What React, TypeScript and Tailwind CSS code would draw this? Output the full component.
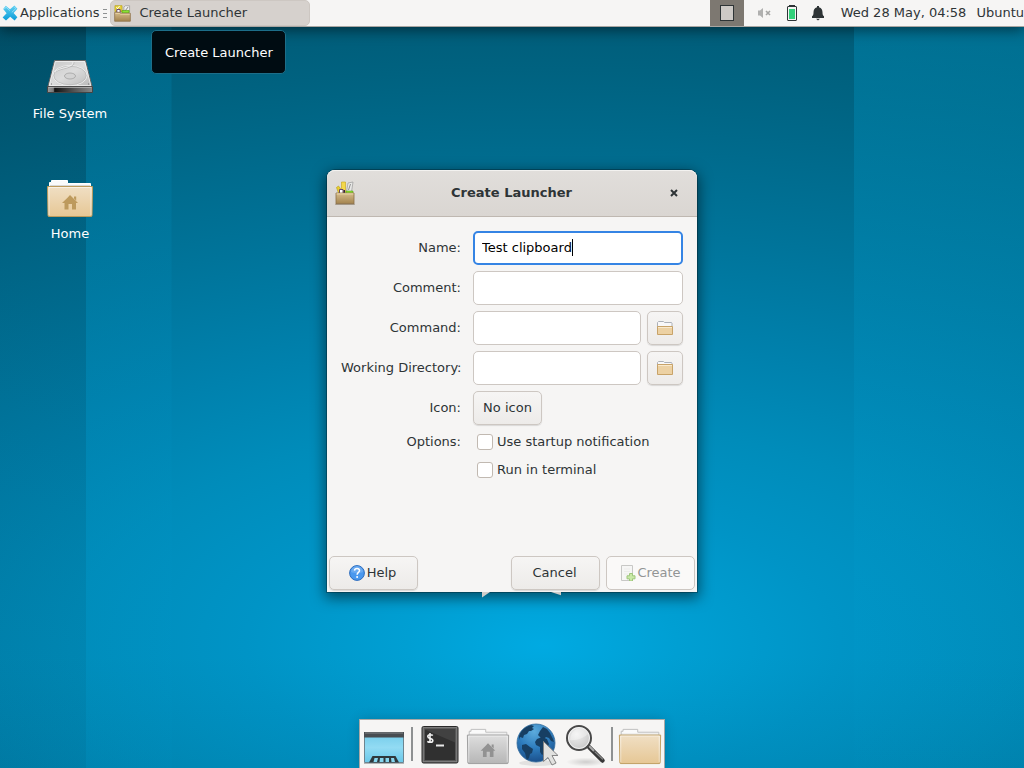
import type { ReactNode } from "react";

const controlBase =
  "flex h-[34px] items-center justify-center rounded-[5px] border border-[#cdc7c2] bg-linear-to-b from-[#f6f5f4] to-[#edebe9] shadow-[0_1px_1px_rgba(0,0,0,0.12)]";
const fieldBase =
  "h-[34px] w-full min-w-0 rounded-[5px] border border-[#cdc7c2] bg-white px-2 text-black outline-none";

function MouseLogo() {
  return (
    <svg viewBox="0 0 16 16" className="size-4 shrink-0" aria-hidden="true">
      <defs>
        <linearGradient id="xf" x1="0" y1="0" x2="0" y2="1">
          <stop offset="0" stopColor="#5fd0f2" />
          <stop offset="1" stopColor="#0a9bd8" />
        </linearGradient>
      </defs>
      <path d="M1.200 4 3.800.800l4.200 3.400L12.400.600 15.400 3.800 11.600 7.900 15.400 12.200 12.600 15.500 8.200 11.800 4 15.500.600 12.600 4.600 8.200z" fill="url(#xf)" />
      <path d="M2.400 4 4 2.200l3.800 3.400M12.400 2l1.400 1.600L9.800 7.400" fill="none" stroke="#a5e6fa" strokeWidth=".8" />
    </svg>
  );
}

function Toolbox({ className, tall = false }: { className: string; tall?: boolean }) {
  return (
    <svg viewBox={tall ? "0 0 20 24" : "0 0 18 18"} preserveAspectRatio="none" className={className} aria-hidden="true">
      <defs>
        <linearGradient id="tb" x1="0" y1="0" x2="0" y2="1">
          <stop offset="0" stopColor="#d6bd8c" />
          <stop offset="1" stopColor="#a3834e" />
        </linearGradient>
      </defs>
      {tall ? (
        <g>
          <path d="M1.500 6.500 3.500 5l3 4v3h-3z" fill="#e9cf2f" stroke="#b59a12" strokeWidth=".6" />
          <path d="M6.500 1h4v10.500h-4z" fill="#f4d84a" stroke="#c4a417" strokeWidth=".6" />
          <path d="m13 2 5-1-1.500 10h-5z" fill="#e8e8e6" stroke="#999" strokeWidth=".7" />
          <path d="m15.500 3-2 6" stroke="#888" strokeWidth=".9" />
          <path d="M4.500 8.500h3.500V13H4.500z" fill="#fff" stroke="#5c3566" strokeWidth=".9" />
          <path d="M8.500 9H10v4H8.500z" fill="#332244" />
          <path d="M11 10h7v3h-7z" fill="#8ae234" stroke="#4e9a06" strokeWidth=".5" />
          <path d="M1 12h18v10.800H1z" fill="url(#tb)" stroke="#8b7048" strokeWidth=".8" />
          <path d="M1.600 12.900h16.800" stroke="#ecd9ad" />
          <path d="M0 23.300h20" stroke="#57482f" strokeOpacity=".4" />
        </g>
      ) : (
        <g>
          <path d="M1 .700h7.500V7H1z" fill="#e8d33c" stroke="#b5a016" strokeWidth=".7" />
          <path d="m2.500 2.500 4 4M6 1 3 4.500" stroke="#fff" />
          <path d="M3 4.700h3.500V8H3z" fill="#fff" stroke="#5c3566" strokeWidth="1" />
          <path d="M10.500 2.200 12 .800h4.500V7h-6z" fill="#eee" stroke="#999" strokeWidth=".8" />
          <path d="m15 2-3 4" stroke="#888" />
          <path d="M8.500 5.800H16V8.500H8.500z" fill="#8ae234" stroke="#4e9a06" strokeWidth=".6" />
          <path d="M.700 7.700h5l1.300 1h10.300v8.500H.700z" fill="url(#tb)" stroke="#8b7048" strokeWidth=".8" />
          <path d="M1.400 8.900h4.400l1.200.900h9.600" fill="none" stroke="#ecd9ad" strokeWidth=".8" />
        </g>
      )}
    </svg>
  );
}

function HardDisk() {
  return (
    <svg viewBox="0 0 48 48" className="size-12" aria-hidden="true">
      <defs>
        <linearGradient id="hd" x1="0" y1="0" x2="1" y2="1">
          <stop offset="0" stopColor="#c6c6c6" />
          <stop offset=".5" stopColor="#dcdcdc" />
          <stop offset="1" stopColor="#b8b8b8" />
        </linearGradient>
        <linearGradient id="hf">
          <stop offset="0" stopColor="#9b9b9b" />
          <stop offset=".13" stopColor="#777" />
          <stop offset=".16" stopColor="#111" />
          <stop offset=".6" stopColor="#555" />
          <stop offset="1" stopColor="#888" />
        </linearGradient>
      </defs>
      <path d="M8.500 8.500h31L46 34.500H2z" fill="url(#hd)" stroke="#666" />
      <path d="M9.300 9.500h29.400L44.800 33.500H3.200z" fill="none" stroke="#f7f7f7" strokeWidth=".7" />
      <ellipse cx="24" cy="23.500" rx="17" ry="10" fill="none" stroke="#ededed" strokeWidth="1" />
      <ellipse cx="24" cy="23.500" rx="16.200" ry="9.300" fill="none" stroke="#b0b0b0" strokeWidth=".6" />
      <path d="M28 10c1 7-15 6-18 10" fill="none" stroke="#aaa" strokeWidth=".6" />
      <path d="M27 10c1 6-14 5-18 10" fill="none" stroke="#f2f2f2" strokeWidth=".8" />
      <ellipse cx="24" cy="24" rx="5.500" ry="3" fill="#d3d3d3" stroke="#a2a2a2" strokeWidth=".8" />
      <path d="M1.500 34.500h45v6h-45z" fill="url(#hf)" stroke="#444" />
      <path d="M2.500 35.400h43" stroke="#bbb" strokeWidth=".8" />
      <path d="M5 32h1M42 32h1" stroke="#777" />
    </svg>
  );
}

function BigFolder({ className, grey = false, home = false }: { className: string; grey?: boolean; home?: boolean }) {
  return (
    <svg viewBox="0 0 48 40" preserveAspectRatio="none" className={className} aria-hidden="true">
      <defs>
        <linearGradient id="ff" x1="0" y1="0" x2="0" y2="1">
          <stop offset="0" stopColor="#f0dfc4" />
          <stop offset="1" stopColor="#e6c795" />
        </linearGradient>
        <linearGradient id="fg" x1="0" y1="0" x2="0" y2="1">
          <stop offset="0" stopColor="#dedede" />
          <stop offset="1" stopColor="#b6b6b6" />
        </linearGradient>
      </defs>
      <path d="M3.500 12V4.500h2v-2h16v3h23V12z" fill="#fafafa" stroke={grey || !home ? "#bcbcbc" : "#fff"} />
      <path d="M4 7.500h40" stroke="#d8d8d8" />
      <path d="M1.500 8.500h45l-.500 29a1 1 0 0 1-1 1H3a1 1 0 0 1-1-1z" fill={grey ? "url(#fg)" : "url(#ff)"} stroke={grey ? "#9b9b9b" : "#bd9b5c"} />
      <path d="M3 37V9.500h42V37" fill="none" stroke="#fff" strokeOpacity=".55" />
      {home && (
        <path d="m24 17 8 8h-2v6.500h-4V26h-3.500v5.500h-4V25h-2.500l5.500-5.300z M28 18.500h2.200v4.200L28 20.500z" fill={grey ? "#929292" : "#bd9a5d"} />
      )}
    </svg>
  );
}

function SmallFolder({ open = false }: { open?: boolean }) {
  return (
    <svg viewBox="0 0 18 16" className="h-4 w-[18px]" aria-hidden="true">
      <path d="M1.500 8V2.500l1-1h5l1 1h7l.500.500V8z" fill="#f8f8f9" stroke="#acb1b8" />
      <path d={open ? "M1.500 6.500h15v8h-15z" : "M1.500 4.500h15v10h-15z"} fill="#ecd1a3" stroke="#c8a368" />
      <path d={open ? "M2 7.500h14" : "M2 5.500h14"} stroke="#f8e9cd" />
    </svg>
  );
}

function DesktopIcon() {
  return (
    <svg viewBox="0 0 48 48" className="size-12" aria-hidden="true">
      <defs>
        <linearGradient id="dk" x1="0" y1="0" x2="0" y2="1">
          <stop offset="0" stopColor="#72cbea" />
          <stop offset=".5" stopColor="#92dbf3" />
          <stop offset="1" stopColor="#6ac8e9" />
        </linearGradient>
      </defs>
      <path d="M4.500 12.500h39v30h-39z" fill="url(#dk)" stroke="#6d8590" />
      <path d="M4 12h40v5.500H4z" fill="#484d51" />
      <path d="M5 13h38" stroke="#808487" />
      <path d="M4 43.500h40" stroke="#8a8a8a" strokeOpacity=".6" />
      <path d="m9 42.500 3.500-6.500h23l3.500 6.500z" fill="#2f373b" />
      <path d="M14.500 38h3.500l-1 4h-3.500zM20 38h3.500v4h-4zM25.500 38H29v4h-3.500zM31 38h3l1 4h-3.500z" fill="#86d5ee" />
    </svg>
  );
}

function TerminalIcon() {
  return (
    <svg viewBox="0 0 48 48" className="size-12" aria-hidden="true">
      <rect x="6" y="6.500" width="36" height="36.500" rx="1.500" fill="#575757" stroke="#292929" />
      <rect x="7.200" y="7.700" width="33.600" height="34" fill="none" stroke="#8a8a8a" strokeWidth=".8" />
      <rect x="9" y="9.500" width="30" height="30.500" fill="#303030" />
      <path d="M9 9.500h30v13z" fill="#414141" />
      <path d="M16.800 15.500c-1-1-5-1.200-5 1 0 2.800 5 1 5 4 0 2.500-4 2-5.500.800M14 13v10" fill="none" stroke="#f1f1f1" strokeWidth="1.600" />
      <path d="M20 25.500h8" stroke="#e8e8e8" strokeWidth="2" />
    </svg>
  );
}

function GlobeIcon() {
  return (
    <svg viewBox="0 0 48 48" className="size-12" aria-hidden="true">
      <defs>
        <radialGradient id="gl" cx=".45" cy=".2" r=".85">
          <stop offset="0" stopColor="#5cabdc" />
          <stop offset=".5" stopColor="#2e7dbe" />
          <stop offset="1" stopColor="#184a85" />
        </radialGradient>
      </defs>
      <ellipse cx="26" cy="43" rx="19" ry="3" fill="#000" opacity=".08" />
      <circle cx="24" cy="23" r="19" fill="url(#gl)" stroke="#336c9c" strokeWidth=".8" />
      <g fill="#173f63">
        <path d="M7 16c2-6 6-9 12-11l3 1-2 2 2 1-3 2-2 0-2 3-3 1-1 3-3-1-1 3z" />
        <path d="m10 25 4-1 4 3 3 2-1 4-2 1-1 4-2 2-1-3-1-4-3-4z" />
        <path d="m28 11 3-4 4 2 3 4 3 6 1 3-3-1-2-3-3-1-2 2-3-1-3-3z" />
        <path d="m25 19 5-2 5 2 2 5-2 4-2 5-3 2-2-3 0-5-4-2-1-3z" />
      </g>
      <path d="M31.500 21.500v20l4.500-4 4 7.500 4-2-4-7.500h6z" fill="#e1e1df" stroke="#858585" />
    </svg>
  );
}

function LensIcon() {
  return (
    <svg viewBox="0 0 48 48" className="size-12" aria-hidden="true">
      <defs>
        <radialGradient id="ln" cx=".4" cy=".35" r=".7">
          <stop offset="0" stopColor="#f0f0f0" />
          <stop offset="1" stopColor="#c6c6c6" />
        </radialGradient>
        <radialGradient id="ls">
          <stop offset="0" stopColor="#000" stopOpacity=".16" />
          <stop offset="1" stopColor="#000" stopOpacity="0" />
        </radialGradient>
      </defs>
      <ellipse cx="26" cy="42" rx="20" ry="4.500" fill="url(#ls)" />
      <path d="m29 27 13.500 13.500" stroke="#383838" strokeWidth="4.500" strokeLinecap="round" />
      <path d="m29 26 5 5" stroke="#aaa" strokeWidth="2" />
      <path d="m35 32 7.500 7" stroke="#888" strokeWidth="1.200" strokeLinecap="round" />
      <circle cx="19" cy="18" r="12" fill="url(#ln)" stroke="#484848" strokeWidth="2" />
      <circle cx="19" cy="18" r="10.500" fill="none" stroke="#fff" strokeOpacity=".7" />
      <path d="M10 20c5 1 14-2 18-6-3-8-17-8-18 6z" fill="#fff" opacity=".35" />
    </svg>
  );
}

function HelpIcon() {
  return (
    <svg viewBox="0 0 16 16" className="size-4" aria-hidden="true">
      <circle cx="8" cy="8" r="7.400" fill="#4a98ee" stroke="#2e6dbd" />
      <path d="M2 7a6 6 0 0 1 12 0c-3 1.500-9 1.500-12 0z" fill="#85b9f4" opacity=".55" />
      <path d="M5.500 5.600C5.700 2.800 10.700 2.800 10.500 5.700 10.400 7.400 8.100 7.500 8.100 9.700" fill="none" stroke="#fff" strokeWidth="1.500" />
      <circle cx="8.100" cy="12" r="1" fill="#fff" />
    </svg>
  );
}

function NewFileIcon() {
  return (
    <svg viewBox="0 0 16 16" className="size-4 opacity-60" aria-hidden="true">
      <path d="M1.500.500h11v15h-11z" fill="#f5f5f4" stroke="#a8a8a5" />
      <path d="M4 4h6M4 6.500h6M4 9h4" stroke="#e4e4e2" />
      <path d="M9.500 8.500h3v2.300H15v3h-2.500V16h-3v-2.200H7v-3h2.500z" fill="#a9df73" stroke="#63a52c" />
    </svg>
  );
}

function DockButton({ label, children }: { label: string; children: ReactNode }) {
  return (
    <button type="button" aria-label={label} className="flex size-12 items-center justify-center">
      {children}
    </button>
  );
}

function DockSeparator() {
  return (
    <div className="flex w-2 justify-center py-[7px]">
      <div className="w-0.5 bg-[#8e9192]" />
    </div>
  );
}

function Panel() {
  return (
    <header className="relative flex h-[27px] items-start justify-between overflow-hidden border-b border-[#a9a6a2] bg-[#f6f5f4] whitespace-nowrap shadow-[0_3px_14px_rgba(0,0,0,0.5)]">
      <div className="flex h-[26px] items-center">
        <button type="button" className="flex h-full items-center gap-0.5 pl-0.5">
          <MouseLogo />
          <span>Applications</span>
        </button>
        <div className="ml-1 flex w-1 flex-col gap-[3px]">
          <div className="h-px bg-[#8e9192]" />
          <div className="h-px bg-[#8e9192]" />
          <div className="h-px bg-[#8e9192]" />
        </div>
        <button type="button" className="ml-[3px] flex h-[26px] w-[200px] items-center gap-2 rounded-[5px] border border-[#cdc7c2] bg-[#d6d1cd] pl-[3px]">
          <Toolbox className="h-[17px] w-[17px] shrink-0" />
          <span>Create Launcher</span>
        </button>
      </div>
      <div className="flex h-[26px] items-center">
        <button type="button" aria-label="Workspace" className="flex h-full w-[34px] items-center justify-center bg-[#7d7871]">
          <span className="h-4 w-3.5 border border-[#2e3436] bg-[#cdc9c5]" />
        </button>
        <button type="button" aria-label="Volume muted" className="ml-3 flex size-4 items-center justify-center">
          <svg viewBox="0 0 16 16" className="size-4" aria-hidden="true">
            <path d="M2 5.500h2L7 3v10L4 10.500H2z" fill="#b0b0af" />
            <path d="m10 6 4 4m0-4-4 4" stroke="#a5a5a4" strokeWidth="1.600" />
          </svg>
        </button>
        <button type="button" aria-label="Battery" className="ml-3 flex size-4 items-center justify-center">
          <svg viewBox="0 0 16 16" className="size-4" aria-hidden="true">
            <path d="M5 0h6v3H5z" fill="#2e3436" />
            <rect x="3.500" y="1.500" width="9" height="14" rx=".5" fill="#f6f5f4" stroke="#2e3436" />
            <path d="M5 4h6v10H5z" fill="#33d17a" />
          </svg>
        </button>
        <button type="button" aria-label="Notifications" className="ml-2.5 flex size-4 items-center justify-center">
          <svg viewBox="0 0 16 16" className="size-4" aria-hidden="true">
            <path d="M7 1h2v1.300c2.700.700 3.500 2.700 3.500 5.200 0 2.300.500 3 1.500 3.800V13H2v-1.700C3 10.500 3.500 9.800 3.500 7.500 3.500 5 4.300 3 7 2.300zM6 13.800h4L8 15.500z" fill="#2e3436" />
          </svg>
        </button>
        <button type="button" className="ml-[15px]">Wed 28 May, 04:58</button>
        <button type="button" className="ml-2.5">Ubuntu</button>
      </div>
    </header>
  );
}

function LauncherDialog() {
  return (
    <section
      role="dialog"
      aria-labelledby="dialog-title"
      className="absolute top-[170px] left-1/2 w-[370px] -translate-x-1/2 rounded-t-lg bg-[#f6f5f4] shadow-[0_0_0_1px_rgba(0,0,0,0.25),0_4px_14px_2px_rgba(0,0,0,0.5)]"
    >
      <div className="flex h-[47px] items-center justify-between rounded-t-lg border-b border-[#bfb8b1] bg-linear-to-b from-[#e1dedb] to-[#dad6d2] px-2 shadow-[inset_0_1px_#f3f2f0]">
        <Toolbox tall className="h-6 w-5" />
        <h1 id="dialog-title" className="pr-px font-bold">Create Launcher</h1>
        <button type="button" aria-label="Close" className="flex h-5 w-5 items-center pl-px">
          <svg viewBox="0 0 8 8" className="size-2" aria-hidden="true">
            <path d="m1 1 6 6M7 1 1 7" stroke="#2e3436" strokeWidth="2" />
          </svg>
        </button>
      </div>
      <form className="px-3.5 pt-3.5" onSubmit={(e) => e.preventDefault()}>
        <div className="grid grid-cols-[120px_1fr] items-center gap-x-3 gap-y-1.5">
          <label htmlFor="name" className="text-right whitespace-nowrap">Name:</label>
          <div className="relative">
            <input id="name" type="text" defaultValue="Test clipboard" className="block h-[34px] w-full min-w-0 rounded-[5px] border-2 border-[#3584e4] bg-white px-[7px] pb-0.5 text-black outline-none" />
            <span className="absolute top-2 left-[99px] h-[17px] w-px bg-black" />
          </div>
          <label htmlFor="comment" className="text-right whitespace-nowrap">Comment:</label>
          <input id="comment" type="text" className={fieldBase} />
          <label htmlFor="command" className="text-right whitespace-nowrap">Command:</label>
          <div className="flex gap-1.5">
            <input id="command" type="text" className={fieldBase} />
            <button type="button" aria-label="Choose command" className={controlBase + " w-9 shrink-0"}>
              <SmallFolder open />
            </button>
          </div>
          <label htmlFor="directory" className="text-right whitespace-nowrap">Working Directory:</label>
          <div className="flex gap-1.5">
            <input id="directory" type="text" className={fieldBase} />
            <button type="button" aria-label="Choose working directory" className={controlBase + " w-9 shrink-0"}>
              <SmallFolder />
            </button>
          </div>
          <label htmlFor="icon" className="text-right whitespace-nowrap">Icon:</label>
          <button id="icon" type="button" className={controlBase + " w-[69px]"}>No icon</button>
        </div>
        <div className="mt-1.5 grid grid-cols-[120px_1fr] gap-x-3">
          <span id="options" className="text-right leading-[22px]">Options:</span>
          <div role="group" aria-labelledby="options" className="flex flex-col gap-1.5 pl-1">
            <label className="flex h-[22px] items-center gap-1">
              <input type="checkbox" className="size-4 appearance-none rounded-[3px] border border-[#c1b9b1] bg-white" />
              <span>Use startup notification</span>
            </label>
            <label className="flex h-[22px] items-center gap-1">
              <input type="checkbox" className="size-4 appearance-none rounded-[3px] border border-[#c1b9b1] bg-white" />
              <span>Run in terminal</span>
            </label>
          </div>
        </div>
      </form>
      <div className="mt-[75px] flex gap-1.5 px-0.5 pb-0.5">
        <button type="button" className={controlBase + " mr-auto w-[89px] gap-0.5 pr-0.5"}>
          <HelpIcon />
          <span>Help</span>
        </button>
        <button type="button" className={controlBase + " w-[89px] pr-0.5"}>Cancel</button>
        <button type="button" disabled className="flex h-[34px] w-[89px] items-center justify-center gap-px rounded-[5px] border border-[#cdc7c2] bg-[#faf9f8] text-[#929595]">
          <NewFileIcon />
          <span>Create</span>
        </button>
      </div>
    </section>
  );
}

export default function App() {
  return (
    <div className="relative flex min-h-screen flex-col overflow-hidden [background:linear-gradient(180deg,rgba(0,20,30,0.16),rgba(0,20,30,0.04))_0_0/8.4%_100%_no-repeat,linear-gradient(180deg,rgba(0,150,200,0.2),rgba(0,150,200,0.08))_9.15%_0/8.35%_100%_no-repeat,linear-gradient(180deg,rgba(0,165,215,0.3),rgba(0,165,215,0.02))_100%_0/16.6%_100%_no-repeat,linear-gradient(180deg,rgba(0,20,30,0)_85%,rgba(0,20,30,0.05)),radial-gradient(ellipse_1350px_640px_at_53%_84%,#00aae2_0%,#009fd3_10%,#0094c6_22%,#008cba_35%,#0081ad_48%,#00749a_65%,#006280_90%,#00556f_110%)] font-['DejaVu_Sans',sans-serif] text-[13px] leading-4 text-[#2e3436]">
      <Panel />
      <div role="tooltip" className="absolute top-[30px] left-[151px] rounded-[5px] border border-[#1d6e89] bg-[#000c12] pt-3.5 pr-3 pb-3 pl-[13px] whitespace-nowrap text-white">
        Create Launcher
      </div>
      <main className="flex w-[140px] flex-col pt-[25px] text-center text-white [text-shadow:0_1px_2px_#000]">
        <button type="button" className="flex h-[120px] flex-col items-center gap-1.5">
          <HardDisk />
          <span>File System</span>
        </button>
        <button type="button" className="flex h-[120px] flex-col items-center gap-2 pt-1.5">
          <BigFolder home className="h-10 w-12" />
          <span>Home</span>
        </button>
      </main>
      <LauncherDialog />
      <svg viewBox="0 0 84 6" className="absolute top-[592px] left-1/2 h-1.5 w-[84px] -translate-x-[31px]" aria-hidden="true">
        <path d="M1 0h8L1 5.500zM70 0h10v3.300z" fill="#d0cdca" />
      </svg>
      <nav aria-label="Dock" className="absolute bottom-0 left-1/2 flex h-12 -translate-x-1/2 bg-[#f6f5f4] shadow-[0_0_0_1px_#aaa8a5,0_0_12px_rgba(0,0,0,0.2)]">
        <DockButton label="Show desktop"><DesktopIcon /></DockButton>
        <DockSeparator />
        <DockButton label="Terminal"><TerminalIcon /></DockButton>
        <DockButton label="File manager"><BigFolder grey home className="mt-1 h-[38px] w-11" /></DockButton>
        <DockButton label="Web browser"><GlobeIcon /></DockButton>
        <DockButton label="Application finder"><LensIcon /></DockButton>
        <DockSeparator />
        <DockButton label="Home folder"><BigFolder className="mt-1 h-[38px] w-11" /></DockButton>
      </nav>
    </div>
  );
}
